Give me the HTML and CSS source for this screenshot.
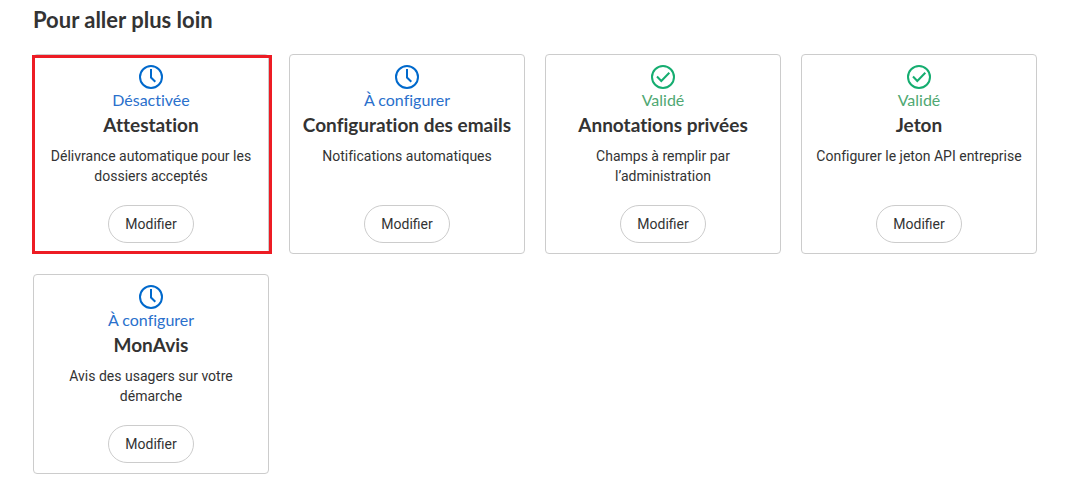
FILE: index.html
```html
<!DOCTYPE html>
<html lang="fr">
<head>
<meta charset="utf-8">
<title>Pour aller plus loin</title>
<link rel="stylesheet" href="styles.css">
</head>
<body>
<svg class="symbols" aria-hidden="true">
  <symbol id="clock" viewBox="0 0 26 26">
    <circle cx="13" cy="13" r="11"/><path d="M13 5V13.500L17.300 17.800"/>
  </symbol>
  <symbol id="check" viewBox="0 0 26 26">
    <circle cx="13" cy="13" r="11"/><path d="M7 12.500L11.300 17L19.300 8.700"/>
  </symbol>
</svg>
<main class="page">
  <h2 class="title">Pour aller plus loin</h2>
  <div class="grid">
    <article class="card highlighted">
      <svg class="icon clock" aria-hidden="true"><use href="#clock"/></svg>
      <p class="status pending">Désactivée</p>
      <h3 class="name">Attestation</h3>
      <p class="description">Délivrance automatique pour les dossiers acceptés</p>
      <button class="button" type="button">Modifier</button>
    </article>
    <article class="card">
      <svg class="icon clock" aria-hidden="true"><use href="#clock"/></svg>
      <p class="status pending">À configurer</p>
      <h3 class="name">Configuration des emails</h3>
      <p class="description">Notifications automatiques</p>
      <button class="button" type="button">Modifier</button>
    </article>
    <article class="card">
      <svg class="icon check" aria-hidden="true"><use href="#check"/></svg>
      <p class="status valid">Validé</p>
      <h3 class="name">Annotations privées</h3>
      <p class="description">Champs à remplir par l’administration</p>
      <button class="button" type="button">Modifier</button>
    </article>
    <article class="card">
      <svg class="icon check" aria-hidden="true"><use href="#check"/></svg>
      <p class="status valid">Validé</p>
      <h3 class="name">Jeton</h3>
      <p class="description">Configurer le jeton API entreprise</p>
      <button class="button" type="button">Modifier</button>
    </article>
    <article class="card">
      <svg class="icon clock" aria-hidden="true"><use href="#clock"/></svg>
      <p class="status pending">À configurer</p>
      <h3 class="name">MonAvis</h3>
      <p class="description">Avis des usagers sur votre démarche</p>
      <button class="button" type="button">Modifier</button>
    </article>
  </div>
</main>
</body>
</html>
```

FILE: styles.css
```css
* { box-sizing: border-box; }
body {
  margin: 0;
  background: #fff;
  color: #333;
  font-family: Lato, "Open Sans", sans-serif;
  font-variant-ligatures: none;
}
.symbols { position: absolute; width: 0; height: 0; }
.page { padding: 8px 48px 10px 33px; }
.title { margin: 0 0 22px; font-size: 22px; line-height: 24px; }
.grid {
  display: grid;
  grid-template-columns: repeat(4, 1fr);
  gap: 20px;
}
.card {
  position: relative;
  display: flex;
  flex-direction: column;
  align-items: center;
  min-height: 200px;
  padding: 9px 9px 10px;
  border: 1px solid #ccc;
  border-radius: 4px;
  text-align: center;
}
.highlighted::after {
  content: "";
  position: absolute;
  inset: 0 -4px -1px -2px;
  border: 3px solid #ed1c24;
  pointer-events: none;
}
.icon {
  width: 26px;
  height: 26px;
  fill: none;
  stroke: currentColor;
  stroke-width: 2;
}
.clock { color: #0069cc; }
.check { color: #15ad70; }
.status { margin: 0; font-size: 16px; line-height: 20px; }
.pending { color: #2a70cc; }
.valid { color: #4fa873; }
.name { margin: 0 0 6px; font-size: 19px; line-height: 30px; white-space: nowrap; }
.description { margin: 0 0 19px; font-family: Roboto, sans-serif; font-size: 14px; line-height: 20px; }
.button {
  margin-top: auto;
  height: 38px;
  padding: 0 16px;
  border: 1px solid #ccc;
  border-radius: 19px;
  background: #fff;
  color: #333;
  font: 14px/20px Roboto, sans-serif;
}
```
